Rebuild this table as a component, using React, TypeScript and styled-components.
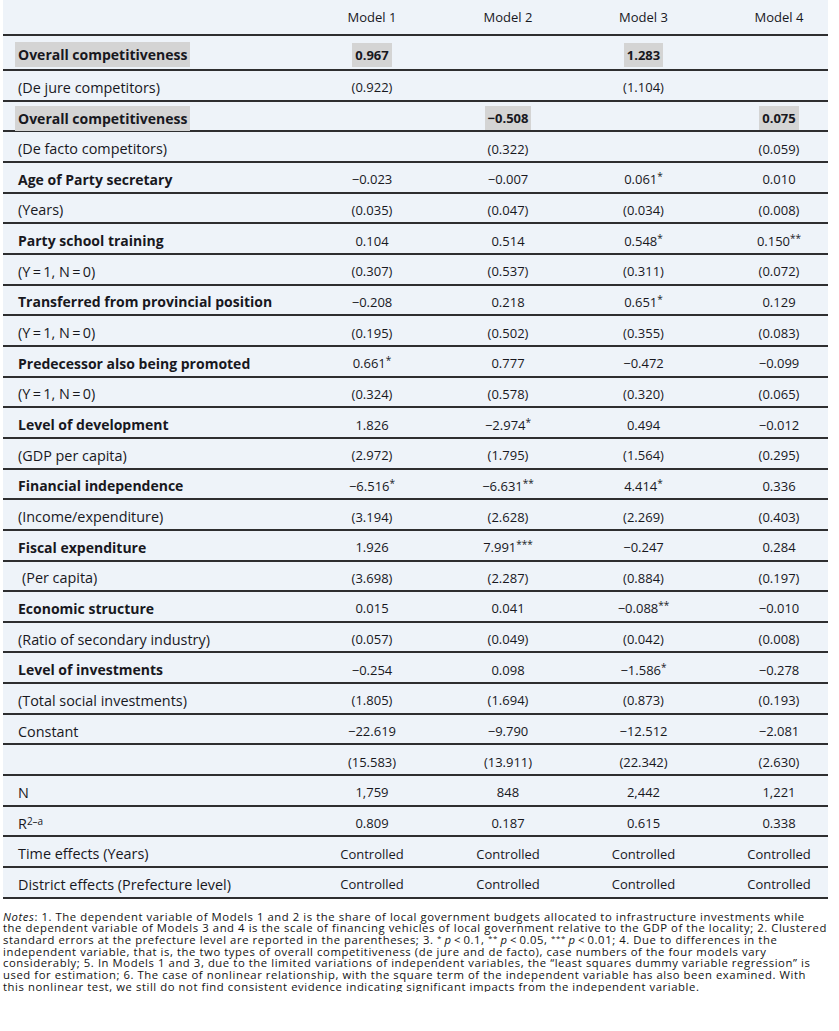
import React from "react";
import styled, { createGlobalStyle } from "styled-components";

const GlobalStyle = createGlobalStyle`
  html, body { margin: 0; padding: 0; background: #ffffff; }
  body { font-family: "Open Sans", Lato, sans-serif; color: #18181e; }
`;

const Page = styled.div`
  width: 839px;
  padding-left: 3px;
  box-sizing: border-box;
`;

const Table = styled.div`
  width: 825px;
  background: #eef3f9;
`;

const cols = "301px 136px 136px 135px 117px";

const HeaderRow = styled.div`
  display: grid;
  grid-template-columns: ${cols};
  height: 34px;
  align-items: center;
  border-bottom: 2px solid #2e2e30;
`;

const Row = styled.div<{ $tall?: boolean }>`
  display: grid;
  grid-template-columns: ${cols};
  height: ${(p) => (p.$tall ? "33px" : "28.67px")};
  align-items: center;
  border-bottom: 2px solid #2e2e30;
`;

const Label = styled.div<{ $bold?: boolean; $indent?: boolean }>`
  padding-left: ${(p) => (p.$indent ? "19px" : "15px")};
  padding-top: 4px;
  font-weight: ${(p) => (p.$bold ? 700 : 400)};
  font-size: ${(p) => (p.$bold ? "14px" : "14.4px")};
  white-space: nowrap;
`;

const Cell = styled.div<{ $last?: boolean }>`
  text-align: center;
  padding-left: ${(p) => (p.$last ? "19px" : "0")};
  padding-top: 4px;
  font-size: 13px;
  white-space: nowrap;
`;

const HeadCell = styled(Cell)`
  font-size: 13px;
  padding-top: 0;
`;

const Highlight = styled.span<{ $label?: boolean }>`
  display: inline-block;
  background: #d4d4d4;
  padding: 3px 3px;
  margin-left: ${(p) => (p.$label ? "-3px" : "0")};
  font-weight: 700;
`;

const Stars = styled.sup`
  font-size: 10px;
  line-height: 0;
  vertical-align: 4px;
`;

const NoteStars = styled.sup`
  font-size: 8px;
  line-height: 0;
  vertical-align: 3px;
`;

const Notes = styled.div`
  margin-top: 12px;
  font-size: 11.3px;
  letter-spacing: 0.57px;
  line-height: 11.67px;
  color: #121212;
`;

const NoteLine = styled.div`
  white-space: nowrap;
  height: 11.67px;
`;

type RowData = {
  label: string;
  bold?: boolean;
  hlLabel?: boolean;
  indent?: boolean;
  tall?: boolean;
  cells: string[];
  hl?: number[];
  sup?: boolean;
};

const rows: RowData[] = [
  { label: "Overall competitiveness", bold: true, hlLabel: true, tall: true, cells: ["0.967", "", "1.283", ""], hl: [0, 2] },
  { label: "(De jure competitors)", cells: ["(0.922)", "", "(1.104)", ""] },
  { label: "Overall competitiveness", bold: true, hlLabel: true, cells: ["", "−0.508", "", "0.075"], hl: [1, 3] },
  { label: "(De facto competitors)", cells: ["", "(0.322)", "", "(0.059)"] },
  { label: "Age of Party secretary", bold: true, cells: ["−0.023", "−0.007", "0.061*", "0.010"] },
  { label: "(Years)", cells: ["(0.035)", "(0.047)", "(0.034)", "(0.008)"] },
  { label: "Party school training", bold: true, cells: ["0.104", "0.514", "0.548*", "0.150**"] },
  { label: "(Y\u2009=\u20091, N\u2009=\u20090)", cells: ["(0.307)", "(0.537)", "(0.311)", "(0.072)"] },
  { label: "Transferred from provincial position", bold: true, cells: ["−0.208", "0.218", "0.651*", "0.129"] },
  { label: "(Y\u2009=\u20091, N\u2009=\u20090)", cells: ["(0.195)", "(0.502)", "(0.355)", "(0.083)"] },
  { label: "Predecessor also being promoted", bold: true, cells: ["0.661*", "0.777", "−0.472", "−0.099"] },
  { label: "(Y\u2009=\u20091, N\u2009=\u20090)", cells: ["(0.324)", "(0.578)", "(0.320)", "(0.065)"] },
  { label: "Level of development", bold: true, cells: ["1.826", "−2.974*", "0.494", "−0.012"] },
  { label: "(GDP per capita)", cells: ["(2.972)", "(1.795)", "(1.564)", "(0.295)"] },
  { label: "Financial independence", bold: true, cells: ["−6.516*", "−6.631**", "4.414*", "0.336"] },
  { label: "(Income/expenditure)", cells: ["(3.194)", "(2.628)", "(2.269)", "(0.403)"] },
  { label: "Fiscal expenditure", bold: true, cells: ["1.926", "7.991***", "−0.247", "0.284"] },
  { label: "(Per capita)", indent: true, cells: ["(3.698)", "(2.287)", "(0.884)", "(0.197)"] },
  { label: "Economic structure", bold: true, cells: ["0.015", "0.041", "−0.088**", "−0.010"] },
  { label: "(Ratio of secondary industry)", cells: ["(0.057)", "(0.049)", "(0.042)", "(0.008)"] },
  { label: "Level of investments", bold: true, cells: ["−0.254", "0.098", "−1.586*", "−0.278"] },
  { label: "(Total social investments)", cells: ["(1.805)", "(1.694)", "(0.873)", "(0.193)"] },
  { label: "Constant", cells: ["−22.619", "−9.790", "−12.512", "−2.081"] },
  { label: "", cells: ["(15.583)", "(13.911)", "(22.342)", "(2.630)"] },
  { label: "N", cells: ["1,759", "848", "2,442", "1,221"] },
  { label: "R", sup: true, cells: ["0.809", "0.187", "0.615", "0.338"] },
  { label: "Time effects (Years)", cells: ["Controlled", "Controlled", "Controlled", "Controlled"] },
  { label: "District effects (Prefecture level)", cells: ["Controlled", "Controlled", "Controlled", "Controlled"] },
];

const Value: React.FC<{ text: string; hl: boolean }> = ({ text, hl }) => {
  const m = text.match(/^(.*?)(\*+)$/);
  const num = m ? m[1] : text;
  const stars = m ? m[2] : "";
  const content = (
    <>
      {num}
      {stars && <Stars>{stars}</Stars>}
    </>
  );
  return hl ? <Highlight>{content}</Highlight> : content;
};

export default function App() {
  return (
    <Page>
      <GlobalStyle />
      <Table>
        <HeaderRow>
          <Label />
          <HeadCell>Model 1</HeadCell>
          <HeadCell>Model 2</HeadCell>
          <HeadCell>Model 3</HeadCell>
          <HeadCell $last>Model 4</HeadCell>
        </HeaderRow>
        {rows.map((r, i) => (
          <Row key={i} $tall={r.tall}>
            <Label $bold={r.bold} $indent={r.indent}>
              {r.hlLabel ? (
                <Highlight $label>{r.label}</Highlight>
              ) : r.sup ? (
                <>
                  R<Stars>2–a</Stars>
                </>
              ) : (
                r.label
              )}
            </Label>
            {r.cells.map((c, j) => (
              <Cell key={j} $last={j === 3}>
                <Value text={c} hl={!!r.hl && r.hl.includes(j) && c !== ""} />
              </Cell>
            ))}
          </Row>
        ))}
      </Table>
      <Notes>
        <NoteLine>
          <i>Notes</i>: 1. The dependent variable of Models 1 and 2 is the share of local government budgets allocated to infrastructure investments while
        </NoteLine>
        <NoteLine>
          the dependent variable of Models 3 and 4 is the scale of financing vehicles of local government relative to the GDP of the locality; 2. Clustered
        </NoteLine>
        <NoteLine>
          standard errors at the prefecture level are reported in the parentheses; 3. <NoteStars>*</NoteStars>&thinsp;<i>p</i>&thinsp;&lt;&thinsp;0.1, <NoteStars>**</NoteStars>&thinsp;<i>p</i>&thinsp;&lt;&thinsp;0.05, <NoteStars>***</NoteStars>&thinsp;<i>p</i>&thinsp;&lt;&thinsp;0.01; 4. Due to differences in the
        </NoteLine>
        <NoteLine>
          independent variable, that is, the two types of overall competitiveness (de jure and de facto), case numbers of the four models vary
        </NoteLine>
        <NoteLine>
          considerably; 5. In Models 1 and 3, due to the limited variations of independent variables, the “least squares dummy variable regression” is
        </NoteLine>
        <NoteLine>
          used for estimation; 6. The case of nonlinear relationship, with the square term of the independent variable has also been examined. With
        </NoteLine>
        <NoteLine>
          this nonlinear test, we still do not find consistent evidence indicating significant impacts from the independent variable.
        </NoteLine>
      </Notes>
    </Page>
  );
}
